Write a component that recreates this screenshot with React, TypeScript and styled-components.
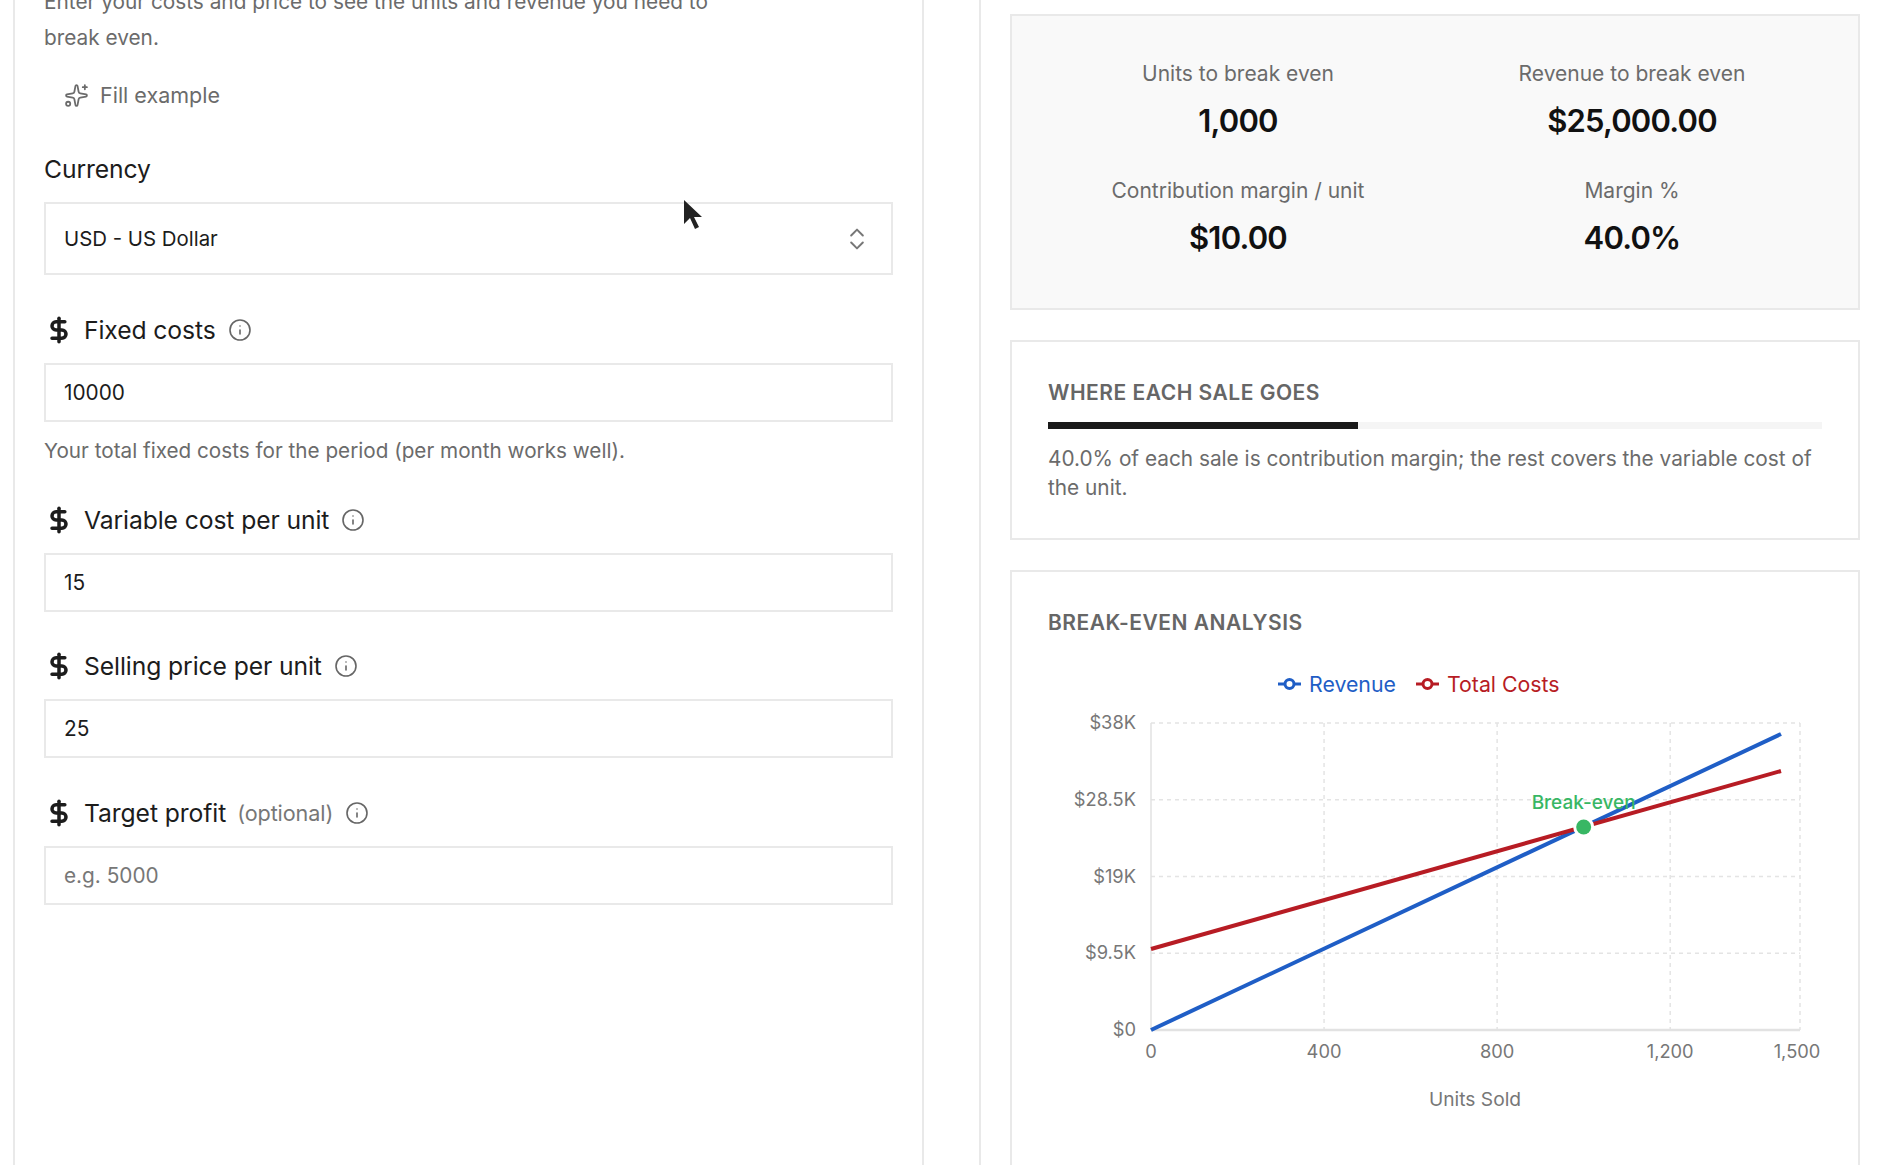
import React from 'react';
import styled, { createGlobalStyle } from 'styled-components';
import { ChevronsUpDown, DollarSign, Info, Sparkles } from 'lucide-react';

const GlobalStyle = createGlobalStyle`
	html, body {
		margin: 0;
		height: 100%;
		overflow: hidden;
		background: #fff;
	}
	body {
		font-family: Inter, 'Liberation Sans', sans-serif;
		color: #1a1a1a;
	}
`;

const Page = styled.div`
	display: grid;
	grid-template-columns: 911px 910px;
	column-gap: 55px;
	height: 1300px;
	margin-top: -60px;
	padding-left: 13px;
`;

const Panel = styled.section`
	box-sizing: border-box;
	background: #fff;
	border: 2px solid #e9e9e9;
	border-top: 0;
`;

const LeftPanel = styled(Panel)`
	padding: 44px 29px 0 29px;
`;

const RightPanel = styled(Panel)`
	padding: 74px 29px 0 29px;
	border-right: 0;
	display: flex;
	flex-direction: column;
	gap: 30px;
`;

const Intro = styled.p`
	margin: 0;
	max-width: 700px;
	font-size: 20.8px;
	line-height: 35.5px;
	color: #6b6b6b;
`;

const FillButton = styled.button`
	display: flex;
	align-items: center;
	gap: 11px;
	height: 40px;
	margin: 20px 0 40px;
	padding: 0 0 0 20px;
	border: 0;
	background: none;
	font: inherit;
	font-size: 21.5px;
	color: #6b6b6b;
`;

const Field = styled.div<{ $short?: boolean }>`
	margin-bottom: ${(props) => (props.$short ? '41px' : '40.7px')};
`;

const LabelRow = styled.div`
	display: flex;
	align-items: center;
	height: 28px;
	margin-bottom: 19px;
	font-size: 24.7px;
	letter-spacing: -0.1px;
	color: #1c1c1c;
`;

const LabelIcon = styled.span`
	display: flex;
	width: 40px;
	padding-left: 1px;
	box-sizing: border-box;
	color: #1c1c1c;
`;

const Optional = styled.span`
	margin-left: 11px;
	font-size: 21.6px;
	color: #777;
`;

const InfoIcon = styled(Info)`
	margin-left: 12px;
	color: #666;
`;

const TextInput = styled.input`
	display: block;
	box-sizing: border-box;
	width: 100%;
	height: 59px;
	padding: 0 18px;
	border: 2px solid #e9e9e9;
	background: #fff;
	font: inherit;
	font-size: 20.8px;
	color: #1c1c1c;
	outline: none;

	&::placeholder {
		color: #777;
	}
`;

const SelectBox = styled.div`
	display: flex;
	align-items: center;
	justify-content: space-between;
	box-sizing: border-box;
	height: 73px;
	padding: 0 20px 0 18px;
	border: 2px solid #e9e9e9;
	font-size: 20.4px;
	color: #1c1c1c;

	svg {
		color: #777;
	}
`;

const Help = styled.p`
	margin: 15px 0 0;
	font-size: 20.7px;
	line-height: 28px;
	color: #6b6b6b;
`;

const StatsCard = styled.div`
	display: grid;
	grid-template-columns: 394px 394px;
	justify-content: center;
	row-gap: 36px;
	padding: 44px 0 50px;
	background: #f9f9f9;
	border: 2px solid #e9e9e9;
`;

const Stat = styled.div`
	text-align: center;
`;

const StatLabel = styled.div`
	font-size: 21px;
	line-height: 28px;
	color: #6b6b6b;
`;

const StatValue = styled.div`
	margin-top: 13px;
	font-size: 31px;
	line-height: 40px;
	font-weight: 600;
	letter-spacing: -0.8px;
	color: #111;
`;

const Card = styled.div<{ $fill?: boolean }>`
	padding: 37px 36px 36px 36px;
	background: #fff;
	border: 2px solid #e9e9e9;
	flex: ${(props) => (props.$fill ? 1 : 'none')};
`;

const CardTitle = styled.h2`
	margin: 0;
	font-size: 21px;
	line-height: 28px;
	font-weight: 600;
	letter-spacing: 0.5px;
	color: #666;
`;

const BarTrack = styled.div`
	height: 7px;
	margin: 15px 0 15px;
	background: #f5f5f5;
`;

const BarFill = styled.div`
	height: 100%;
	background: #1a1a1a;
`;

const CardText = styled.p`
	margin: 0;
	font-size: 20.8px;
	line-height: 29px;
	color: #6b6b6b;
`;

const Legend = styled.div`
	display: flex;
	gap: 19px;
	height: 28px;
	margin-top: 33px;
	padding-left: 229px;
`;

const LegendItem = styled.div<{ $color: string }>`
	display: flex;
	align-items: center;
	gap: 7px;
	font-size: 21.3px;
	color: ${(props) => props.$color};
`;

const ChartSvg = styled.svg`
	display: block;
	font-family: Inter, 'Liberation Sans', sans-serif;
`;

const Cursor = styled.svg`
	position: absolute;
	left: 683px;
	top: 199px;
`;

const BLUE = '#1f5ec6';
const RED = '#b71c24';
const GREEN = '#38b764';

// chart frame, in pixels of the svg
const LEFT = 103;
const RIGHT = 752;
const TOP = 25;
const BOTTOM = 332;
const xOf = (units: number) => LEFT + (units / 1500) * (RIGHT - LEFT);
const yOf = (money: number) => BOTTOM - (money / 38000) * (BOTTOM - TOP);

const yTicks = [
	{ value: 0, label: '$0' },
	{ value: 9500, label: '$9.5K' },
	{ value: 19000, label: '$19K' },
	{ value: 28500, label: '$28.5K' },
	{ value: 38000, label: '$38K' }
];
const xTicks = [
	{ value: 0, label: '0' },
	{ value: 400, label: '400' },
	{ value: 800, label: '800' },
	{ value: 1200, label: '1,200' },
	{ value: 1500, label: '1,500' }
];

const LegendMark = ({ color }: { color: string }) => (
	<svg width="25" height="14" viewBox="0 0 25 14">
		<path d="M1 7h23" stroke={color} strokeWidth="3" />
		<circle cx="12.5" cy="7" r="4.5" fill="#fff" stroke={color} strokeWidth="3" />
	</svg>
);

const FieldLabel = ({ children, extra }: { children: React.ReactNode; extra?: string }) => (
	<LabelRow>
		<LabelIcon>
			<DollarSign size={28} strokeWidth={3} />
		</LabelIcon>
		{children}
		{extra && <Optional>{extra}</Optional>}
		<InfoIcon size={24} strokeWidth={1.6} />
	</LabelRow>
);

const BreakEvenChart = () => {
	const dotX = xOf(1000);
	const dotY = yOf(25000);
	return (
		<ChartSvg width="774" height="423" viewBox="0 0 774 423">
			{yTicks.map((tick) => (
				<g key={tick.label}>
					{tick.value > 0 && (
						<line x1={LEFT} x2={RIGHT} y1={yOf(tick.value)} y2={yOf(tick.value)} stroke="#e4e4e4" strokeWidth="1.5" strokeDasharray="4 4" />
					)}
					<text x="88" y={yOf(tick.value) + 6} textAnchor="end" fontSize="18.3" fill="#777">
						{tick.label}
					</text>
				</g>
			))}
			{xTicks.map((tick, i) => (
				<g key={tick.label}>
					{tick.value > 0 && (
						<line x1={xOf(tick.value)} x2={xOf(tick.value)} y1={TOP} y2={BOTTOM} stroke="#e4e4e4" strokeWidth="1.5" strokeDasharray="4 4" />
					)}
					<text x={i === 4 ? xOf(tick.value) - 3 : xOf(tick.value)} y="360" textAnchor="middle" fontSize="18.3" fill="#777">
						{tick.label}
					</text>
				</g>
			))}
			<line x1={LEFT} x2={LEFT} y1={TOP} y2={BOTTOM} stroke="#e2e2e2" strokeWidth="1.5" />
			<line x1={LEFT} x2={RIGHT} y1={BOTTOM} y2={BOTTOM} stroke="#e2e2e2" strokeWidth="2.5" />
			<text x="427" y="408" textAnchor="middle" fontSize="19.2" fill="#777">
				Units Sold
			</text>
			<line x1={LEFT} y1={BOTTOM} x2="733" y2="36" stroke={BLUE} strokeWidth="4" />
			<line x1={LEFT} y1="251" x2="733" y2="73" stroke={RED} strokeWidth="4" />
			<circle cx={dotX} cy={dotY - 1} r="10.5" fill="#fff" />
			<circle cx={dotX} cy={dotY - 1} r="7.5" fill={GREEN} />
			<text x={dotX} y="111" textAnchor="middle" fontSize="19" fontWeight="500" fill={GREEN}>
				Break-even
			</text>
		</ChartSvg>
	);
};

export default function App() {
	const marginShare = 40;
	return (
		<>
			<GlobalStyle />
			<Page>
				<LeftPanel>
					<Intro>Enter your costs and price to see the units and revenue you need to break even.</Intro>
					<FillButton type="button">
						<Sparkles size={25} strokeWidth={1.7} />
						Fill example
					</FillButton>
					<Field $short>
						<LabelRow>Currency</LabelRow>
						<SelectBox>
							USD - US Dollar
							<ChevronsUpDown size={28} strokeWidth={1.7} />
						</SelectBox>
					</Field>
					<Field>
						<FieldLabel>Fixed costs</FieldLabel>
						<TextInput defaultValue="10000" />
						<Help>Your total fixed costs for the period (per month works well).</Help>
					</Field>
					<Field>
						<FieldLabel>Variable cost per unit</FieldLabel>
						<TextInput defaultValue="15" />
					</Field>
					<Field>
						<FieldLabel>Selling price per unit</FieldLabel>
						<TextInput defaultValue="25" />
					</Field>
					<Field>
						<FieldLabel extra="(optional)">Target profit</FieldLabel>
						<TextInput placeholder="e.g. 5000" />
					</Field>
				</LeftPanel>
				<RightPanel>
					<StatsCard>
						<Stat>
							<StatLabel>Units to break even</StatLabel>
							<StatValue>1,000</StatValue>
						</Stat>
						<Stat>
							<StatLabel>Revenue to break even</StatLabel>
							<StatValue>$25,000.00</StatValue>
						</Stat>
						<Stat>
							<StatLabel>Contribution margin / unit</StatLabel>
							<StatValue>$10.00</StatValue>
						</Stat>
						<Stat>
							<StatLabel>Margin %</StatLabel>
							<StatValue>40.0%</StatValue>
						</Stat>
					</StatsCard>
					<Card>
						<CardTitle>WHERE EACH SALE GOES</CardTitle>
						<BarTrack>
							<BarFill style={{ width: `${marginShare}%` }} />
						</BarTrack>
						<CardText>40.0% of each sale is contribution margin; the rest covers the variable cost of the unit.</CardText>
					</Card>
					<Card $fill>
						<CardTitle>BREAK-EVEN ANALYSIS</CardTitle>
						<Legend>
							<LegendItem $color={BLUE}>
								<LegendMark color={BLUE} />
								Revenue
							</LegendItem>
							<LegendItem $color={RED}>
								<LegendMark color={RED} />
								Total Costs
							</LegendItem>
						</Legend>
						<BreakEvenChart />
					</Card>
				</RightPanel>
			</Page>
			<Cursor width="20" height="32" viewBox="0 0 20 32">
				<path d="M1 1v24l6-6 5 11 4-2-5-10h8z" fill="#222" />
			</Cursor>
		</>
	);
}
